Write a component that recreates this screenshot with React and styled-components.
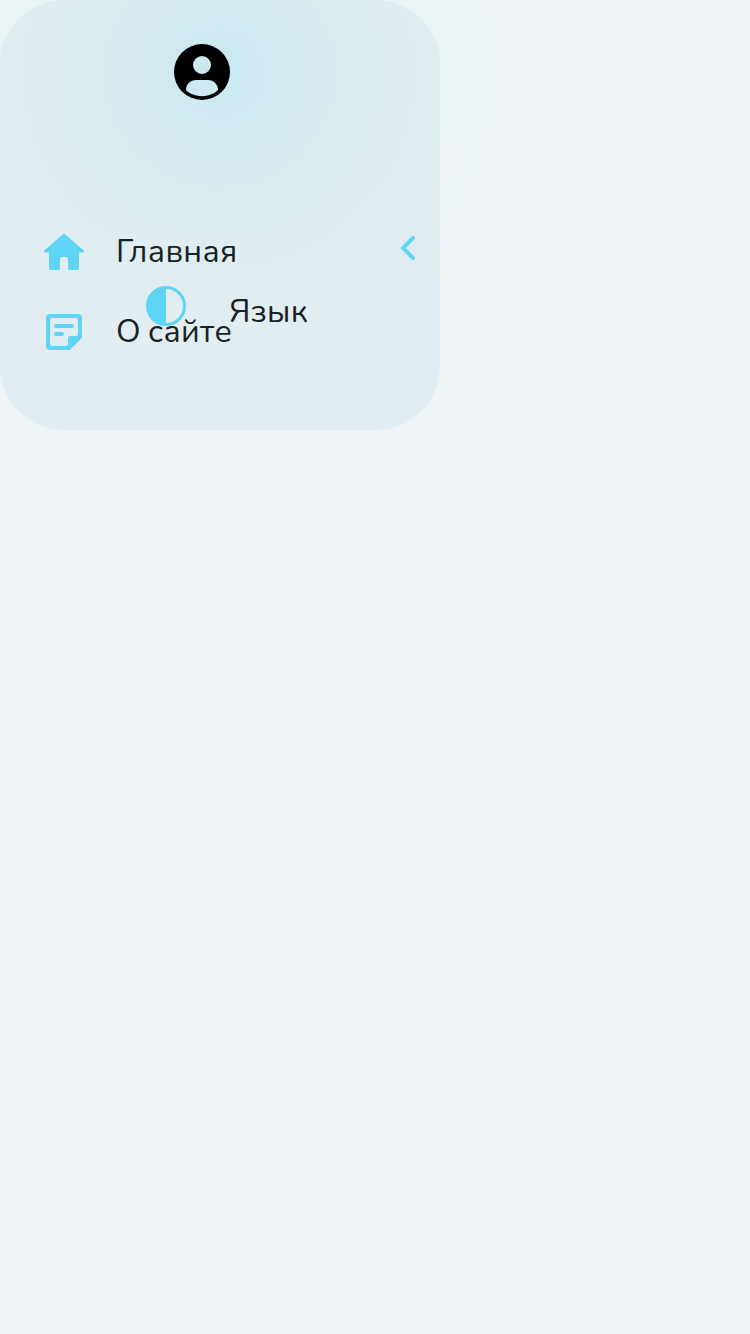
import React from "react";
import styled, { createGlobalStyle } from "styled-components";

const accent = "#5fd4f5";

const GlobalStyle = createGlobalStyle`
  * { box-sizing: border-box; }
  body {
    margin: 0;
    background: #eff4f7;
    font-family: Nunito, "Open Sans", "Noto Sans", sans-serif;
    color: #182124;
  }
`;

const Page = styled.main`
  min-height: 1334px;
  background: radial-gradient(circle at 220px 72px, #eaf5f6 0, #ecf5f6 220px, #eff4f7 300px);
`;

const Sidebar = styled.nav`
  position: relative;
  width: 440px;
  height: 430px;
  padding: 44px 24px 0 40px;
  border-radius: 64px;
  background: radial-gradient(
    circle at 220px 72px,
    #c9e9f1 0,
    #d3eaf1 60px,
    #dcecf1 125px,
    #dfedf1 190px,
    #e1edf1 260px,
    #e2edf3 310px
  );
`;

const Profile = styled.div`
  display: flex;
  padding-left: 134px;
  margin-bottom: 128px;
`;

const Menu = styled.div`
  display: flex;
  flex-direction: column;
  gap: 32px;
`;

const Item = styled.div`
  display: flex;
  align-items: center;
  height: 48px;
`;

const Label = styled.span`
  font-size: 32px;
  line-height: 44px;
  margin-left: 28px;
  white-space: nowrap;
  letter-spacing: 0.35px;
  word-spacing: -1.5px;
`;

const Chevron = styled.svg`
  margin: -8px 0 0 auto;
`;

const Language = styled.div`
  position: absolute;
  left: 146px;
  top: 286px;
  display: flex;
  align-items: flex-end;
  height: 48px;

  svg { align-self: flex-start; }
  ${Label} { margin-left: 43px; }
`;

const Svg = styled.svg`
  display: block;
  flex: none;
`;

const Avatar = () => (
  <Svg width="56" height="56" viewBox="0 0 56 56">
    <path
      fillRule="evenodd"
      d="M28 0a28 28 0 1 1 0 56a28 28 0 0 1 0-56zM28 12a9 9 0 1 0 0 18a9 9 0 0 0 0-18zM22 36c-6 0-10 4.500-10 10c4 4 10 6.200 16 6.200s12-2.200 16-6.200c0-5.500-4-10-10-10z"
    />
  </Svg>
);

const Home = () => (
  <Svg width="48" height="48" viewBox="0 0 24 24" fill={accent}>
    <path d="M12.700 3.270a1 1 0 0 0-1.400 0L2.180 11.300c-.36.32-.14.95.36.95H4.500V20a1 1 0 0 0 1 1H9a1 1 0 0 0 1-1v-4.500a1 1 0 0 1 1-1h2a1 1 0 0 1 1 1V20a1 1 0 0 0 1 1h3.500a1 1 0 0 0 1-1v-7.750h1.960c.5 0 .72-.63.36-.95z" />
  </Svg>
);

const Note = () => (
  <Svg width="48" height="48" viewBox="0 0 24 24" fill={accent}>
    <path
      fillRule="evenodd"
      d="M5 3h14a2 2 0 0 1 2 2v9.900L14.900 21H5a2 2 0 0 1-2-2V5a2 2 0 0 1 2-2zM6 5a1 1 0 0 0-1 1v12a1 1 0 0 0 1 1h7a1 1 0 0 0 1-1v-3a1 1 0 0 1 1-1h3a1 1 0 0 0 1-1V6a1 1 0 0 0-1-1z"
    />
    <rect x="7" y="8" width="10" height="2" rx="1" />
    <rect x="7" y="12" width="5" height="2" rx="1" />
  </Svg>
);

const Contrast = () => (
  <Svg width="40" height="40" viewBox="0 0 40 40">
    <circle cx="20" cy="20" r="18.500" fill="none" stroke={accent} strokeWidth="3" />
    <path d="M20 1a19 19 0 0 0 0 38z" fill={accent} />
  </Svg>
);

export default function App() {
  return (
    <>
      <GlobalStyle />
      <Page>
        <Sidebar>
          <Profile>
            <Avatar />
          </Profile>
          <Menu>
            <Item>
              <Home />
              <Label>Главная</Label>
              <Chevron width="16" height="24" viewBox="0 0 16 24">
                <path d="M13 2L3 12l10 10" fill="none" stroke={accent} strokeWidth="4" strokeLinecap="round" strokeLinejoin="round" />
              </Chevron>
            </Item>
            <Item>
              <Note />
              <Label>О сайте</Label>
            </Item>
          </Menu>
          <Language>
            <Contrast />
            <Label>Язык</Label>
          </Language>
        </Sidebar>
      </Page>
    </>
  );
}
